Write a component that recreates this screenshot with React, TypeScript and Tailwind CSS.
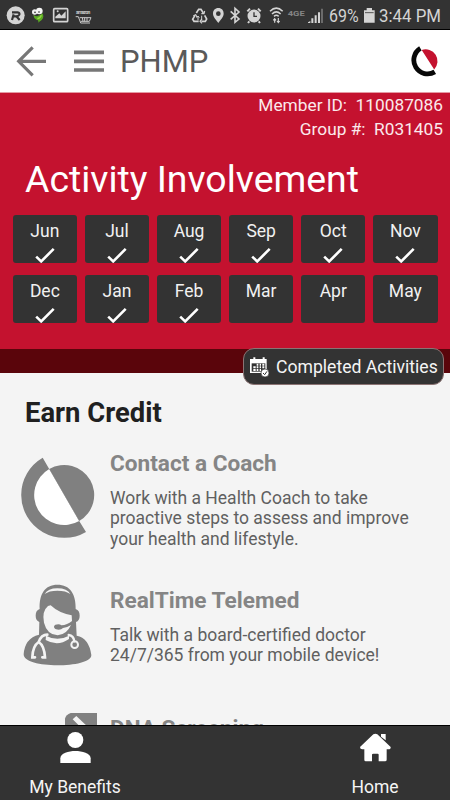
import React from "react";

const months = [
  ["Jun", true], ["Jul", true], ["Aug", true], ["Sep", true], ["Oct", true], ["Nov", true],
  ["Dec", true], ["Jan", true], ["Feb", true], ["Mar", false], ["Apr", false], ["May", false],
] as const;

function StatusBar() {
  return (
    <div className="flex h-[30px] shrink-0 items-center border-b border-black bg-[#333] text-[#d4d4d4]">
      <svg className="ml-[6px] h-[30px] w-[88px] shrink-0" viewBox="18 0 264 90">
        <circle cx="47" cy="46" r="27" fill="#d4d4d4" />
        <path d="M36 37H53Q60 38 58 44Q56 49 48 49H38M41 43L36 60M49 49L59 60" fill="none" stroke="#333" strokeWidth="6.5" />
        <path d="M100 44Q113 55 127 40Q134 51 125 60L114 68Q118 60 109 59Q101 55 100 44Z" fill="#5aa822" />
        <path d="M112 56Q121 55 124 46" fill="none" stroke="#95d844" strokeWidth="4" />
        <circle cx="104" cy="36" r="8" fill="#eee" />
        <circle cx="118" cy="33" r="10" fill="#f5f5f5" />
        <circle cx="105" cy="37" r="2.5" fill="#222" />
        <circle cx="117" cy="36" r="2.5" fill="#222" />
        <rect x="161" y="26" width="42" height="39" rx="3" fill="none" stroke="#d4d4d4" strokeWidth="5" />
        <path d="M166 55V50L178 40L184 47L197 34V55Z" fill="#d4d4d4" />
        <circle cx="173" cy="34" r="3" fill="#d4d4d4" />
        <text x="228" y="43" fontSize="15" fontWeight="700" fill="#c8c8c8" textLength="43" fontFamily="Roboto, sans-serif">amazon</text>
        <path d="M227 50H235L242 69H270M239 53H273L268 64H242M247 53L249 64M254 53V64M261 53V64" fill="none" stroke="#c8c8c8" strokeWidth="3" />
      </svg>
      <svg className="ml-[97px] h-[30px] w-[136px] shrink-0" viewBox="33 0 408 90">
        <g fill="none" stroke="#d4d4d4" strokeWidth="5">
          <path d="M49 39L56 28H63L70 39M74 46L80 57L76 64H64M56 64H42L38 58L45 46" />
          <path d="M64 41L72 41L74 33M40 47L47 44L51 51M66 57L60 64L66 70" strokeWidth="3.5" />
          <path d="M54 61V49M50 53L54 48L58 53M65 47V58" strokeWidth="3" />
        </g>
        <path fillRule="evenodd" d="M115 24C105 24 99 31 99 41C99 51 110 61 115 69C120 61 131 51 131 41C131 31 125 24 115 24ZM115 34A7 7 0 1 1 115 48A7 7 0 1 1 115 34Z" fill="#d4d4d4" />
        <path d="M152 34L177 57L165 67V25L177 36L152 58" fill="none" stroke="#d4d4d4" strokeWidth="4.8" />
        <circle cx="222" cy="48" r="19.5" fill="#d4d4d4" />
        <path d="M202 34L210 26M234 26L242 34M208 64L204 69M236 64L240 69" stroke="#d4d4d4" strokeWidth="6" />
        <path d="M222 37V49H231" fill="none" stroke="#333" strokeWidth="4" />
        <g fill="none" stroke="#d4d4d4" strokeWidth="4.5">
          <path d="M270 34Q289 15 308 34M276 42Q289 29 302 42M282 49Q289 43 296 49" />
          <path d="M284 68V56M280 61L284 56L288 61M295 54V68M291 63L295 68L299 63" strokeWidth="3.5" />
        </g>
        <text x="323" y="47" textLength="51" lengthAdjust="spacingAndGlyphs" fontSize="24" fontWeight="700" fontFamily="Roboto, sans-serif" fill="#858585">4GE</text>
        <path d="M384 69H391V63L384 67ZM394 69H400V55H394ZM404 69H410V46H404ZM414 69H420V37H414Z" fill="#d4d4d4" />
        <path d="M424 69H428V26H424Z" fill="#888" />
      </svg>
      <div className="ml-[2px] w-[34px] shrink-0 whitespace-nowrap text-[18.5px] leading-[30px]"><span className="inline-block origin-left translate-y-[1px] scale-x-[0.86]">69%</span></div>
      <svg className="h-[30px] w-[12px] shrink-0" viewBox="550 0 36 90">
        <path d="M553 31H561V24H577V31H585V68H553Z" fill="#d4d4d4" />
        <path d="M556 38H582" stroke="#555" strokeWidth="3" />
      </svg>
      <div className="ml-[4px] whitespace-nowrap text-[18.5px] leading-[30px]"><span className="inline-block origin-left translate-y-[1px] scale-x-[0.91]">3:44 PM</span></div>
    </div>
  );
}

function Header() {
  return (
    <div className="flex h-[63px] shrink-0 items-center border-b border-[#e59aa4] bg-white">
      <svg className="ml-[15px] h-[32px] w-[32px]" viewBox="45 135 96 96">
        <path d="M98 142L56 184L98 226M57 184H138" fill="none" stroke="#777" strokeWidth="9.5" />
      </svg>
      <svg className="ml-[26px] h-[32px] w-[32px]" viewBox="219 135 96 96">
        <path d="M222 157H312M222 184H312M222 210H312" stroke="#777" strokeWidth="11" />
      </svg>
      <div className="ml-[15px] pt-[2px] text-[31px] leading-[40px] text-[#5a5a5a]">PHMP</div>
      <svg className="mr-[8px] ml-auto h-[32px] w-[32px]" viewBox="0 0 32 32">
        <path d="M10.4 3.4A13.4 13.4 0 1 0 24.8 26.9" fill="none" stroke="#080808" strokeWidth="4.8" />
        <path d="M11.7 5.1A11.8 11.8 0 0 1 24.2 24.4Z" fill="#c4122f" />
      </svg>
    </div>
  );
}

function CoachIcon() {
  return (
    <svg className="mt-[6px] ml-[20px] h-[83px] w-[76px]" viewBox="0 0 76 83">
      <path d="M22.7 1.7A43 43 0 0 0 1.2 39A43 43 0 0 0 66 75.9L59.2 65L29.2 13Z" fill="#808080" />
      <path d="M29.2 13A30 30 0 1 0 59.2 65Z" fill="#fff" />
      <path d="M29.2 13A30 30 0 0 1 59.2 65Z" fill="#808080" />
    </svg>
  );
}

function DoctorIcon() {
  return (
    <svg className="mt-[-3px] ml-[22px] h-[82px] w-[71px]" viewBox="66 42 213 246">
      <path d="M119 117C117 72 135 44 172 44C210 44 228 72 227 117Q239 121 239 137Q239 152 228 156L230 197Q267 204 274 255C275 276 222 286 172 286C121 286 70 275 71 253Q74 205 117 194L118 156Q107 151 107 137Q107 121 119 117Z" fill="#808080" />
      <path d="M134 72Q144 55 172 55Q202 55 211 72Q198 62 172 62Q147 62 134 72Z" fill="#f4f4f4" />
      <path d="M144 108L152 106Q176 129 215 136L216 153Q202 165 184 166Q179 161 166 164Q158 170 166 177Q181 182 189 174Q202 172 213 165Q200 194 173 196Q141 194 132 158Q125 124 144 108Z" fill="#f4f4f4" />
      <path d="M138 197Q172 216 207 197V207Q173 231 137 210Z" fill="#f4f4f4" />
      <g fill="none" stroke="#f4f4f4" strokeLinecap="round">
        <path d="M142 194Q124 194 116 216Q98 228 97 262H105M116 216Q133 227 135 262H127" strokeWidth="8" />
        <path d="M206 195Q221 197 223 214" strokeWidth="7" />
        <circle cx="224" cy="224" r="10" strokeWidth="6" />
      </g>
    </svg>
  );
}

function CalendarIcon() {
  return (
    <svg className="h-[20px] w-[20px] shrink-0" viewBox="73 455 60 60">
      <path d="M76 461H126V503H76Z" fill="#fff" />
      <path d="M81 474H122V499H81Z" fill="#333" />
      <path d="M89 456V466M117 456V466" stroke="#fff" strokeWidth="6" />
      <path d="M96 478H101M105 478H109M113 478H119M86 486H93M96 486H101M105 486H109M113 486H119M86 494H93M96 494H101M105 494H109" stroke="#fff" strokeWidth="6" />
      <circle cx="121" cy="503" r="12" fill="#fff" stroke="#333" strokeWidth="2" />
      <path d="M115 503L120 508L127 498" fill="none" stroke="#333" strokeWidth="3" />
    </svg>
  );
}

function Activity({ icon, title, lines, className }: { icon: React.ReactNode; title: string; lines: string[]; className: string }) {
  return (
    <div className={`flex shrink-0 ${className}`}>
      <div className="w-[110px] shrink-0">{icon}</div>
      <div className="whitespace-nowrap">
        <h3 className="pt-[1px] text-[22.6px] leading-[26px] font-bold text-[#858585]">{title}</h3>
        <p className="mt-[10.5px] text-[17.5px] leading-[20.7px] text-[#606060]">
          {lines.map((line) => <span key={line} className="block">{line}</span>)}
        </p>
      </div>
    </div>
  );
}

export default function App() {
  return (
    <div className="flex h-[800px] w-[450px] flex-col overflow-hidden bg-[#f4f4f4] font-['Roboto',sans-serif]">
      <StatusBar />
      <Header />
      <section className="relative flex h-[256px] shrink-0 flex-col bg-[#c4122f] text-white">
        <div className="mr-[7px] text-right text-[17.3px] leading-[24px] whitespace-pre text-[#fbe9ec]">
          <div>{"Member ID:  110087086"}</div>
          <div>{"Group #:  R031405"}</div>
        </div>
        <h1 className="mt-[16px] ml-[25px] text-[37.4px] leading-[44px] whitespace-nowrap">Activity Involvement</h1>
        <div className="mt-[14px] ml-[12.6px] grid w-[425px] grid-cols-6 gap-x-[7.6px] gap-y-[12px]">
          {months.map(([month, done]) => (
            <div key={month} className="flex h-[48px] flex-col items-center rounded-[3px] bg-[#333] pt-[6px]">
              <span className="text-[17.5px] leading-[20px] text-[#f1f1f1]">{month}</span>
              {done && (
                <svg className="mt-[6px] h-[16px] w-[20px] shrink-0" viewBox="0 0 20 16">
                  <path d="M1.2 9.6L6.2 14.4L18.7 1.9" fill="none" stroke="#fff" strokeWidth="2.6" />
                </svg>
              )}
            </div>
          ))}
        </div>
        <div className="absolute top-[255px] right-[6px] z-10 flex h-[37px] w-[201px] items-center rounded-[11px] border border-[#8b7373] bg-[#333] pl-[5px]">
          <CalendarIcon />
          <span className="ml-[7px] pt-[1px] text-[17.6px] leading-[20px] whitespace-nowrap text-[#f5f5f5]">Completed Activities</span>
        </div>
      </section>
      <div className="h-[24px] shrink-0 bg-[#5a050b]" />
      <main className="flex h-[352px] shrink-0 flex-col overflow-hidden">
        <h2 className="mt-[24px] ml-[25px] text-[27.4px] leading-[32px] font-bold text-[#202020]">Earn Credit</h2>
        <Activity className="mt-[21px] h-[137px]" icon={<CoachIcon />} title="Contact a Coach" lines={["Work with a Health Coach to take", "proactive steps to assess and improve", "your health and lifestyle."]} />
        <Activity className="h-[126px]" icon={<DoctorIcon />} title="RealTime Telemed" lines={["Talk with a board-certified doctor", "24/7/365 from your mobile device!"]} />
        <Activity
          className="mt-[2px]"
          icon={
            <svg className="mt-[-2px] ml-[64px] h-[33px] w-[33px]" viewBox="192 429 99 99">
              <path d="M212 429H291V528H195V446Q198 434 212 429Z" fill="#808080" />
              <path d="M218 448L229 438L270 477L259 488Z" fill="#f4f4f4" />
            </svg>
          }
          title="DNA Screening"
          lines={[]}
        />
      </main>
      <nav className="flex h-[75px] shrink-0 justify-between border-t border-black bg-[#333] text-[17.5px] leading-[20px] text-[#f5f5f5]">
        <div className="flex w-[150px] flex-col items-center">
          <svg className="mt-[6px] h-[31px] w-[31px]" viewBox="179 486 93 93">
            <circle cx="225" cy="510" r="24" fill="#fff" />
            <path d="M180 579V565C180 550 205 543 225 543C245 543 271 550 271 565V579Z" fill="#fff" />
          </svg>
          <span className="mt-[14px]">My Benefits</span>
        </div>
        <div className="flex w-[150px] flex-col items-center">
          <svg className="mt-[6px] h-[31px] w-[31px]" viewBox="404 486 93 93">
            <path d="M404 531L444 493Q450 489 456 493L496 531Q497 538 489 538H484V569Q484 574 479 574H460V554Q460 551 457 551H444Q440 551 440 554V574H421Q417 574 417 569V538H411Q404 538 404 531Z" fill="#fff" />
            <path d="M467 492H481V511L467 500Z" fill="#fff" />
          </svg>
          <span className="mt-[14px]">Home</span>
        </div>
      </nav>
    </div>
  );
}
